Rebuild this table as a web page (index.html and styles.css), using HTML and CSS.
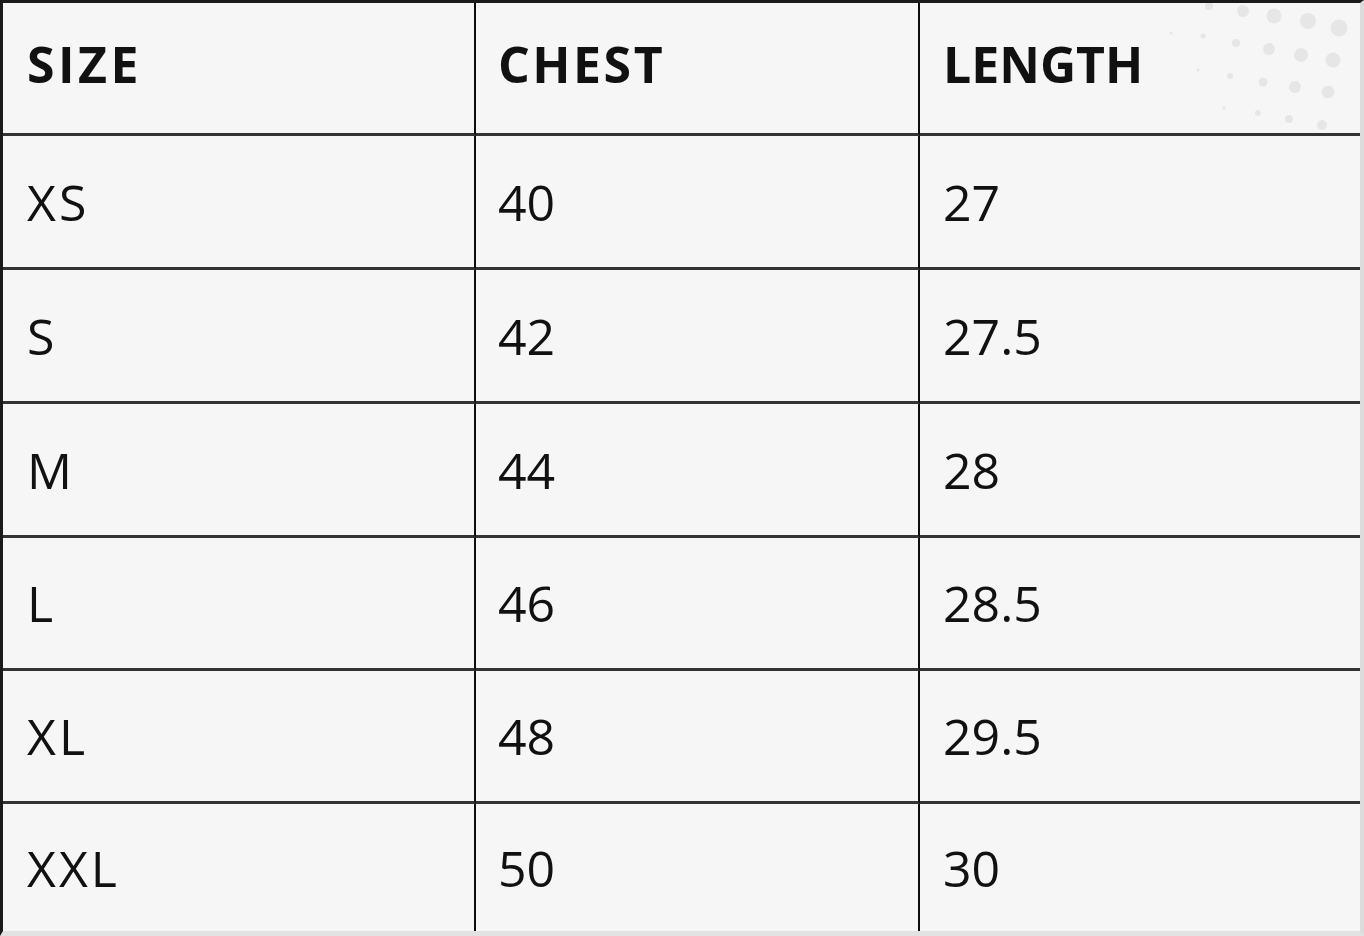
FILE: index.html
```html
<!DOCTYPE html>
<html>
<head>
<meta charset="utf-8">
<link rel="stylesheet" href="styles.css">
</head>
<body>
<div class="chart">
  <svg class="dots" width="200" height="130" viewBox="1164 0 200 130" aria-hidden="true">
    <g fill="#e6e6e6">
      <circle cx="1213" cy="3" r="4"/>
      <circle cx="1247" cy="8" r="6"/>
      <circle cx="1278" cy="13" r="7.5"/>
      <circle cx="1312" cy="18" r="8"/>
      <circle cx="1343" cy="25" r="8.5"/>
      <circle cx="1175" cy="30" r="1.5"/>
      <circle cx="1207" cy="33" r="2.5"/>
      <circle cx="1240" cy="40" r="4"/>
      <circle cx="1273" cy="46" r="6"/>
      <circle cx="1305" cy="52" r="7"/>
      <circle cx="1337" cy="57" r="7.5"/>
      <circle cx="1202" cy="67" r="1.5"/>
      <circle cx="1234" cy="73" r="3"/>
      <circle cx="1267" cy="79" r="4.5"/>
      <circle cx="1299" cy="84" r="6"/>
      <circle cx="1332" cy="89" r="6.5"/>
      <circle cx="1228" cy="105" r="1.5"/>
      <circle cx="1262" cy="110" r="3"/>
      <circle cx="1293" cy="116" r="4"/>
      <circle cx="1326" cy="122" r="5"/>
    </g>
  </svg>
  <div class="cell head size-head">SIZE</div><div class="cell head chest-head">CHEST</div><div class="cell head last">LENGTH</div>
  <div class="cell label">XS</div><div class="cell">40</div><div class="cell last">27</div>
  <div class="cell label">S</div><div class="cell">42</div><div class="cell last">27.5</div>
  <div class="cell label">M</div><div class="cell">44</div><div class="cell last">28</div>
  <div class="cell label">L</div><div class="cell">46</div><div class="cell last">28.5</div>
  <div class="cell label">XL</div><div class="cell">48</div><div class="cell last">29.5</div>
  <div class="cell label bottom">XXL</div><div class="cell bottom">50</div><div class="cell bottom last">30</div>
</div>
</body>
</html>
```

FILE: styles.css
```css
html, body {
  margin: 0;
  padding: 0;
  background: #f5f5f5;
}

.chart {
  position: relative;
  box-sizing: border-box;
  width: 1364px;
  height: 936px;
  display: grid;
  grid-template-columns: 473px 444px 1fr;
  grid-template-rows: 133px 134px 134px 134px 133px 133px 1fr;
  border-top: 3px solid #1a1a1a;
  border-left: 3px solid #1a1a1a;
  border-right: 4px solid #dcdcdc;
  border-bottom: 5px solid #e2e2e2;
  background: #f6f6f6;
  font-family: "Open Sans", "Liberation Sans", sans-serif;
  color: #111;
}

.dots {
  position: absolute;
  top: 0;
  right: 0;
  pointer-events: none;
}

.cell {
  position: relative;
  display: flex;
  align-items: center;
  padding-left: 22px;
  font-size: 50px;
  font-weight: 400;
  border-right: 2px solid #0d0d0d;
  border-bottom: 3px solid #333;
}

.cell.last {
  border-right: none;
  padding-left: 23px;
}

.cell.bottom {
  border-bottom: none;
}

.label {
  padding-left: 24px;
  letter-spacing: 3px;
}

.head {
  font-weight: 700;
  font-size: 50px;
  padding-bottom: 9px;
}

.size-head {
  padding-left: 24px;
  letter-spacing: 3.5px;
}

.chest-head {
  letter-spacing: 2.5px;
}
```
